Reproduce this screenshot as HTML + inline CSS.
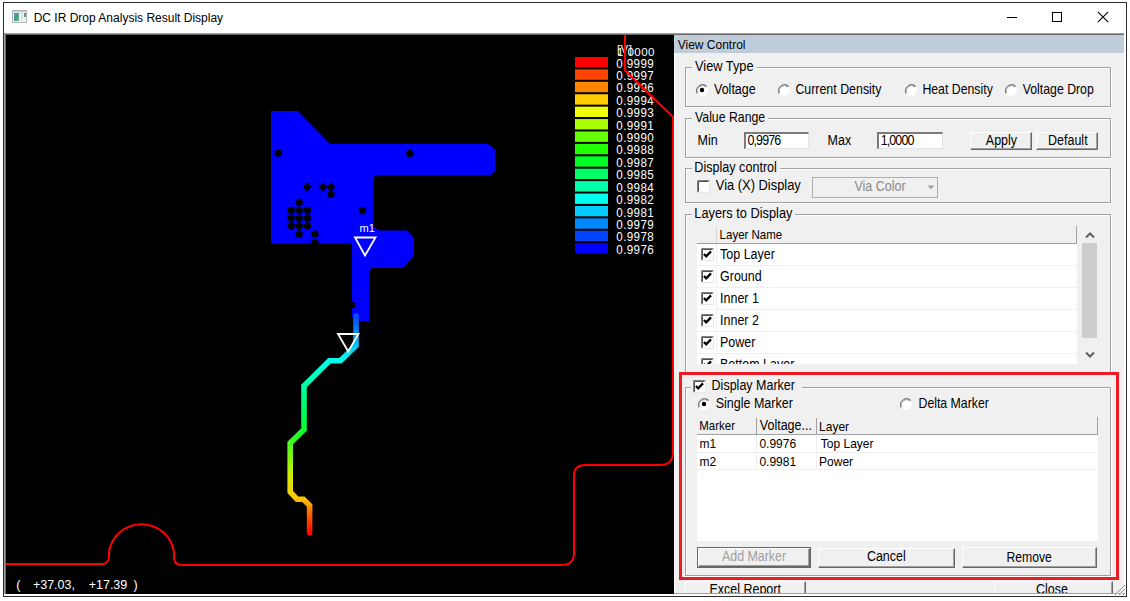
<!DOCTYPE html>
<html><head><meta charset="utf-8"><style>
html,body{margin:0;padding:0;}
body{width:1130px;height:601px;position:relative;overflow:hidden;background:#fff;font-family:'Liberation Sans', sans-serif;}
body div{position:absolute;box-sizing:border-box;}
.t{white-space:pre;}
.btn{background:#F0F0F0;border-style:solid;border-width:1px;border-color:#FFFFFF #696969 #696969 #FFFFFF;box-shadow:inset -1px -1px 0 #A0A0A0;}
.edit{background:#fff;border-style:solid;border-width:2px 1px 1px 2px;border-color:#7A7A7A #E3E3E3 #E3E3E3 #7A7A7A;}
</style></head><body>
<div style="left:3px;top:2px;width:1124px;height:595px;background:#2d2d2d;"></div><div style="left:4px;top:3px;width:1122px;height:593px;background:#ffffff;"></div><svg style="position:absolute;left:12px;top:10px" width="15" height="13" viewBox="0 0 15 13"><rect x="0.5" y="0.5" width="14" height="12" fill="#f4f4f4" stroke="#b5b5b5"/><rect x="1" y="1" width="13" height="1.5" fill="#d0d0d0"/><defs><linearGradient id="ig" x1="0" y1="0" x2="1" y2="1"><stop offset="0" stop-color="#6a8fcc"/><stop offset="0.5" stop-color="#4a9a98"/><stop offset="1" stop-color="#5cc05c"/></linearGradient></defs><rect x="2" y="3" width="5" height="8" fill="url(#ig)"/><rect x="9" y="3" width="2" height="8" fill="#e0e0e0"/><rect x="12" y="3" width="2" height="4" fill="url(#ig)"/></svg><div class="t" style="left:33.70px;top:11.54px;font-size:12px;line-height:12px;color:#000;font-family:'Liberation Sans', sans-serif;">DC IR Drop Analysis Result Display</div><div style="left:1007px;top:17px;width:10px;height:1px;background:#000;"></div><div style="left:1052px;top:12px;width:10px;height:10px;border:1px solid #000;"></div><svg style="position:absolute;left:1097px;top:11px" width="12" height="12" viewBox="0 0 12 12"><path d="M0.8 0.8 L11.2 11.2 M11.2 0.8 L0.8 11.2" stroke="#000" stroke-width="1.1"/></svg><div style="left:4px;top:33px;width:1121px;height:1px;background:#a0a0a0;"></div><div style="left:4px;top:34px;width:1121px;height:1px;background:#696969;"></div><div style="left:4px;top:33px;width:1px;height:561px;background:#a0a0a0;"></div><div style="left:5px;top:34px;width:1px;height:560px;background:#696969;"></div><div style="left:6px;top:35px;width:668px;height:559px;background:#000;"></div><svg style="position:absolute;left:6px;top:35px" width="668" height="559" viewBox="6 35 668 559"><path d="M271 111 L297.5 111 L330 144 L488 144 L495 149.5 L495 171 L490.5 175 L376.2 175 L373 178.2 L373 227 L380 230.5 L407 230.5 L414 238 L414 256 L403 268 L372 268 L369 271 L369 321 L359 321 L359 317 L352 317 L352 245 L350 243 L271 243 Z" fill="#0000FF"/><polygon points="281.95,154.51 279.81,156.65 276.79,156.65 274.65,154.51 274.65,151.49 276.79,149.35 279.81,149.35 281.95,151.49" fill="#000"/><polygon points="413.65,155.01 411.51,157.15 408.49,157.15 406.35,155.01 406.35,151.99 408.49,149.85 411.51,149.85 413.65,151.99" fill="#000"/><polygon points="307.00,182.60 311.40,187.00 307.00,191.40 302.60,187.00" fill="#000"/><polygon points="323.00,182.60 327.40,187.00 323.00,191.40 318.60,187.00" fill="#000"/><polygon points="331.00,182.60 335.40,187.00 331.00,191.40 326.60,187.00" fill="#000"/><polygon points="334.65,195.71 332.51,197.85 329.49,197.85 327.35,195.71 327.35,192.69 329.49,190.55 332.51,190.55 334.65,192.69" fill="#000"/><polygon points="302.85,203.91 300.71,206.05 297.69,206.05 295.55,203.91 295.55,200.89 297.69,198.75 300.71,198.75 302.85,200.89" fill="#000"/><polygon points="294.75,211.81 292.61,213.95 289.59,213.95 287.45,211.81 287.45,208.79 289.59,206.65 292.61,206.65 294.75,208.79" fill="#000"/><polygon points="302.85,211.81 300.71,213.95 297.69,213.95 295.55,211.81 295.55,208.79 297.69,206.65 300.71,206.65 302.85,208.79" fill="#000"/><polygon points="311.05,211.81 308.91,213.95 305.89,213.95 303.75,211.81 303.75,208.79 305.89,206.65 308.91,206.65 311.05,208.79" fill="#000"/><polygon points="294.75,219.61 292.61,221.75 289.59,221.75 287.45,219.61 287.45,216.59 289.59,214.45 292.61,214.45 294.75,216.59" fill="#000"/><polygon points="302.85,219.61 300.71,221.75 297.69,221.75 295.55,219.61 295.55,216.59 297.69,214.45 300.71,214.45 302.85,216.59" fill="#000"/><polygon points="311.05,219.61 308.91,221.75 305.89,221.75 303.75,219.61 303.75,216.59 305.89,214.45 308.91,214.45 311.05,216.59" fill="#000"/><polygon points="294.75,227.41 292.61,229.55 289.59,229.55 287.45,227.41 287.45,224.39 289.59,222.25 292.61,222.25 294.75,224.39" fill="#000"/><polygon points="302.85,227.41 300.71,229.55 297.69,229.55 295.55,227.41 295.55,224.39 297.69,222.25 300.71,222.25 302.85,224.39" fill="#000"/><polygon points="311.05,227.41 308.91,229.55 305.89,229.55 303.75,227.41 303.75,224.39 305.89,222.25 308.91,222.25 311.05,224.39" fill="#000"/><polygon points="302.85,235.71 300.71,237.85 297.69,237.85 295.55,235.71 295.55,232.69 297.69,230.55 300.71,230.55 302.85,232.69" fill="#000"/><polygon points="318.65,235.71 316.51,237.85 313.49,237.85 311.35,235.71 311.35,232.69 313.49,230.55 316.51,230.55 318.65,232.69" fill="#000"/><polygon points="318.65,244.11 316.51,246.25 313.49,246.25 311.35,244.11 311.35,241.09 313.49,238.95 316.51,238.95 318.65,241.09" fill="#000"/><polygon points="366.05,212.11 363.91,214.25 360.89,214.25 358.75,212.11 358.75,209.09 360.89,206.95 363.91,206.95 366.05,209.09" fill="#000"/><circle cx="352" cy="305" r="3.3" fill="#000"/><defs><linearGradient id="tg" gradientUnits="userSpaceOnUse" x1="0" y1="318" x2="0" y2="535"><stop offset="0" stop-color="#0050FF"/><stop offset="0.19" stop-color="#00FFEE"/><stop offset="0.5" stop-color="#00FF30"/><stop offset="0.72" stop-color="#CCEE00"/><stop offset="0.83" stop-color="#FFC800"/><stop offset="0.9" stop-color="#FF6600"/><stop offset="1" stop-color="#FF0000"/></linearGradient></defs><path d="M356 316 L356 345.5 L340.4 360.7 L329.4 360.7 L304 386 L304 429.5 L290.2 443 L290.2 492 L297 499.2 L303.3 499.2 L309.6 505.4 L309.6 533" fill="none" stroke="url(#tg)" stroke-width="5.6" stroke-linejoin="miter" stroke-linecap="round"/><path d="M355 237.5 L375.5 237.5 L365 255.5 Z" fill="none" stroke="#fff" stroke-width="1.8"/><text x="359.5" y="232" font-family="Liberation Sans" font-size="11" fill="#fff">m1</text><path d="M338 334 L358.5 334 L348.2 351.5 Z" fill="none" stroke="#fff" stroke-width="1.8"/><rect x="575" y="57.00" width="33" height="10.4" fill="#FF0000"/><text x="616.3" y="67.60" font-family="Liberation Sans" font-size="11.6" letter-spacing="0.4" fill="#fff" transform="translate(0 67.60) scale(1 1.07) translate(0 -67.60)">0.9999</text><rect x="575" y="69.41" width="33" height="10.4" fill="#FF4400"/><text x="616.3" y="80.01" font-family="Liberation Sans" font-size="11.6" letter-spacing="0.4" fill="#fff" transform="translate(0 80.01) scale(1 1.07) translate(0 -80.01)">0.9997</text><rect x="575" y="81.82" width="33" height="10.4" fill="#FF8800"/><text x="616.3" y="92.42" font-family="Liberation Sans" font-size="11.6" letter-spacing="0.4" fill="#fff" transform="translate(0 92.42) scale(1 1.07) translate(0 -92.42)">0.9996</text><rect x="575" y="94.23" width="33" height="10.4" fill="#FFCC00"/><text x="616.3" y="104.83" font-family="Liberation Sans" font-size="11.6" letter-spacing="0.4" fill="#fff" transform="translate(0 104.83) scale(1 1.07) translate(0 -104.83)">0.9994</text><rect x="575" y="106.64" width="33" height="10.4" fill="#EEFF00"/><text x="616.3" y="117.24" font-family="Liberation Sans" font-size="11.6" letter-spacing="0.4" fill="#fff" transform="translate(0 117.24) scale(1 1.07) translate(0 -117.24)">0.9993</text><rect x="575" y="119.05" width="33" height="10.4" fill="#AAFF00"/><text x="616.3" y="129.65" font-family="Liberation Sans" font-size="11.6" letter-spacing="0.4" fill="#fff" transform="translate(0 129.65) scale(1 1.07) translate(0 -129.65)">0.9991</text><rect x="575" y="131.46" width="33" height="10.4" fill="#66FF00"/><text x="616.3" y="142.06" font-family="Liberation Sans" font-size="11.6" letter-spacing="0.4" fill="#fff" transform="translate(0 142.06) scale(1 1.07) translate(0 -142.06)">0.9990</text><rect x="575" y="143.87" width="33" height="10.4" fill="#22FF00"/><text x="616.3" y="154.47" font-family="Liberation Sans" font-size="11.6" letter-spacing="0.4" fill="#fff" transform="translate(0 154.47) scale(1 1.07) translate(0 -154.47)">0.9988</text><rect x="575" y="156.28" width="33" height="10.4" fill="#00FF22"/><text x="616.3" y="166.88" font-family="Liberation Sans" font-size="11.6" letter-spacing="0.4" fill="#fff" transform="translate(0 166.88) scale(1 1.07) translate(0 -166.88)">0.9987</text><rect x="575" y="168.69" width="33" height="10.4" fill="#00FF66"/><text x="616.3" y="179.29" font-family="Liberation Sans" font-size="11.6" letter-spacing="0.4" fill="#fff" transform="translate(0 179.29) scale(1 1.07) translate(0 -179.29)">0.9985</text><rect x="575" y="181.10" width="33" height="10.4" fill="#00FFAA"/><text x="616.3" y="191.70" font-family="Liberation Sans" font-size="11.6" letter-spacing="0.4" fill="#fff" transform="translate(0 191.70) scale(1 1.07) translate(0 -191.70)">0.9984</text><rect x="575" y="193.51" width="33" height="10.4" fill="#00FFEE"/><text x="616.3" y="204.11" font-family="Liberation Sans" font-size="11.6" letter-spacing="0.4" fill="#fff" transform="translate(0 204.11) scale(1 1.07) translate(0 -204.11)">0.9982</text><rect x="575" y="205.92" width="33" height="10.4" fill="#00CCFF"/><text x="616.3" y="216.52" font-family="Liberation Sans" font-size="11.6" letter-spacing="0.4" fill="#fff" transform="translate(0 216.52) scale(1 1.07) translate(0 -216.52)">0.9981</text><rect x="575" y="218.33" width="33" height="10.4" fill="#0088FF"/><text x="616.3" y="228.93" font-family="Liberation Sans" font-size="11.6" letter-spacing="0.4" fill="#fff" transform="translate(0 228.93) scale(1 1.07) translate(0 -228.93)">0.9979</text><rect x="575" y="230.74" width="33" height="10.4" fill="#0044FF"/><text x="616.3" y="241.34" font-family="Liberation Sans" font-size="11.6" letter-spacing="0.4" fill="#fff" transform="translate(0 241.34) scale(1 1.07) translate(0 -241.34)">0.9978</text><rect x="575" y="243.15" width="33" height="10.4" fill="#0000FF"/><text x="616.3" y="253.75" font-family="Liberation Sans" font-size="11.6" letter-spacing="0.4" fill="#fff" transform="translate(0 253.75) scale(1 1.07) translate(0 -253.75)">0.9976</text><text x="617" y="56" font-family="Liberation Sans" font-size="11.6" letter-spacing="0.4" fill="#fff">1.0000</text><text x="617" y="52.5" font-family="Liberation Sans" font-size="11.6" letter-spacing="0.4" fill="#fff">[V]</text><text x="16.2" y="589" font-family="Liberation Sans" font-size="12.5" fill="#fff" transform="translate(0 589) scale(1 1.04) translate(0 -589)">(</text><text x="32.9" y="589" font-family="Liberation Sans" font-size="12.5" fill="#fff" transform="translate(0 589) scale(1 1.04) translate(0 -589)">+37.03,</text><text x="88.7" y="589" font-family="Liberation Sans" font-size="12.5" fill="#fff" transform="translate(0 589) scale(1 1.04) translate(0 -589)">+17.39</text><text x="133.6" y="589" font-family="Liberation Sans" font-size="12.5" fill="#fff" transform="translate(0 589) scale(1 1.04) translate(0 -589)">)</text><path d="M6 564 L103 564 Q109 563 109 557 L109 552 A32.9 32.9 0 0 1 174 552 L174 557 Q174 565 182 565 L562 565 Q574 565 574 553 L574 476 Q574 465 585 465 L660 465 Q673 465 673 452 L673 117 L625 70.5 L625 35" fill="none" stroke="#FF0000" stroke-width="2"/></svg><div style="left:674px;top:35px;width:450px;height:559px;background:#F0F0F0;"></div><div style="left:674px;top:35px;width:450px;height:18px;background:#BFCDDB;"></div><div style="left:674px;top:53px;width:1px;height:540px;background:#FAFCFC;"></div><div class="t" style="left:677.70px;top:38.84px;font-size:12px;line-height:12px;color:#000;font-family:'Liberation Sans', sans-serif;">View Control</div><div style="left:685px;top:67px;width:425px;height:1px;background:#A0A0A0;"></div><div style="left:686px;top:68px;width:424px;height:1px;background:#FFFFFF;"></div><div style="left:685px;top:67px;width:1px;height:39px;background:#A0A0A0;"></div><div style="left:686px;top:68px;width:1px;height:38px;background:#FFFFFF;"></div><div style="left:685px;top:106px;width:426px;height:1px;background:#A0A0A0;"></div><div style="left:685px;top:107px;width:427px;height:1px;background:#FFFFFF;"></div><div style="left:1110px;top:67px;width:1px;height:39px;background:#A0A0A0;"></div><div style="left:1111px;top:67px;width:1px;height:40px;background:#FFFFFF;"></div><div style="left:692px;top:61px;width:65px;height:14px;background:#F0F0F0;"></div><div class="t" style="left:695.00px;top:61.06px;font-size:12.8px;line-height:12.8px;color:#000;font-family:'Liberation Sans', sans-serif;transform:scaleY(1.13);transform-origin:0 10.84px;">View Type</div><svg style="position:absolute;left:695px;top:83px" width="14" height="14" viewBox="0 0 14 14"><circle cx="7" cy="7" r="6" fill="#fff"/><path d="M2.2 10.4 A6 6 0 0 1 11.8 3.6" fill="none" stroke="#7a7a7a" stroke-width="1.3"/><path d="M2.9 10.0 A5 5 0 0 1 10.9 4.2" fill="none" stroke="#b8b8b8" stroke-width="1"/><circle cx="7" cy="7" r="2.2" fill="#000"/></svg><div class="t" style="left:714.00px;top:84.32px;font-size:12.5px;line-height:12.5px;color:#000;font-family:'Liberation Sans', sans-serif;transform:scaleY(1.13);transform-origin:0 10.58px;">Voltage</div><svg style="position:absolute;left:777px;top:83px" width="14" height="14" viewBox="0 0 14 14"><circle cx="7" cy="7" r="6" fill="#fff"/><path d="M2.2 10.4 A6 6 0 0 1 11.8 3.6" fill="none" stroke="#7a7a7a" stroke-width="1.3"/><path d="M2.9 10.0 A5 5 0 0 1 10.9 4.2" fill="none" stroke="#b8b8b8" stroke-width="1"/></svg><div class="t" style="left:795.40px;top:84.40px;font-size:12.4px;line-height:12.4px;color:#000;font-family:'Liberation Sans', sans-serif;transform:scaleY(1.13);transform-origin:0 10.50px;">Current Density</div><svg style="position:absolute;left:903.5px;top:83px" width="14" height="14" viewBox="0 0 14 14"><circle cx="7" cy="7" r="6" fill="#fff"/><path d="M2.2 10.4 A6 6 0 0 1 11.8 3.6" fill="none" stroke="#7a7a7a" stroke-width="1.3"/><path d="M2.9 10.0 A5 5 0 0 1 10.9 4.2" fill="none" stroke="#b8b8b8" stroke-width="1"/></svg><div class="t" style="left:922.40px;top:84.49px;font-size:12.3px;line-height:12.3px;color:#000;font-family:'Liberation Sans', sans-serif;transform:scaleY(1.13);transform-origin:0 10.41px;">Heat Density</div><svg style="position:absolute;left:1004px;top:83px" width="14" height="14" viewBox="0 0 14 14"><circle cx="7" cy="7" r="6" fill="#fff"/><path d="M2.2 10.4 A6 6 0 0 1 11.8 3.6" fill="none" stroke="#7a7a7a" stroke-width="1.3"/><path d="M2.9 10.0 A5 5 0 0 1 10.9 4.2" fill="none" stroke="#b8b8b8" stroke-width="1"/></svg><div class="t" style="left:1022.70px;top:84.49px;font-size:12.3px;line-height:12.3px;color:#000;font-family:'Liberation Sans', sans-serif;transform:scaleY(1.13);transform-origin:0 10.41px;">Voltage Drop</div><div style="left:685px;top:118px;width:425px;height:1px;background:#A0A0A0;"></div><div style="left:686px;top:119px;width:424px;height:1px;background:#FFFFFF;"></div><div style="left:685px;top:118px;width:1px;height:39px;background:#A0A0A0;"></div><div style="left:686px;top:119px;width:1px;height:38px;background:#FFFFFF;"></div><div style="left:685px;top:157px;width:426px;height:1px;background:#A0A0A0;"></div><div style="left:685px;top:158px;width:427px;height:1px;background:#FFFFFF;"></div><div style="left:1110px;top:118px;width:1px;height:39px;background:#A0A0A0;"></div><div style="left:1111px;top:118px;width:1px;height:40px;background:#FFFFFF;"></div><div style="left:692px;top:112px;width:76px;height:14px;background:#F0F0F0;"></div><div class="t" style="left:695.00px;top:112.49px;font-size:12.3px;line-height:12.3px;color:#000;font-family:'Liberation Sans', sans-serif;transform:scaleY(1.13);transform-origin:0 10.41px;">Value Range</div><div class="t" style="left:697.50px;top:135.32px;font-size:12.5px;line-height:12.5px;color:#000;font-family:'Liberation Sans', sans-serif;transform:scaleY(1.13);transform-origin:0 10.58px;">Min</div><div class="edit" style="left:744px;top:132px;width:65px;height:17px;"></div><div class="t" style="left:747.50px;top:135.32px;font-size:12.5px;line-height:12.5px;color:#000;font-family:'Liberation Sans', sans-serif;transform:scaleY(1.13);transform-origin:0 10.58px;letter-spacing:-0.9px;">0,9976</div><div class="t" style="left:827.60px;top:135.32px;font-size:12.5px;line-height:12.5px;color:#000;font-family:'Liberation Sans', sans-serif;transform:scaleY(1.13);transform-origin:0 10.58px;">Max</div><div class="edit" style="left:877px;top:132px;width:66px;height:17px;"></div><div class="t" style="left:880.70px;top:135.32px;font-size:12.5px;line-height:12.5px;color:#000;font-family:'Liberation Sans', sans-serif;transform:scaleY(1.13);transform-origin:0 10.58px;letter-spacing:-0.9px;">1,0000</div><div class="btn" style="left:970px;top:132px;width:62px;height:18px;"></div><div class="t" style="left:985.80px;top:134.82px;font-size:12.5px;line-height:12.5px;color:#000;font-family:'Liberation Sans', sans-serif;transform:scaleY(1.13);transform-origin:0 10.58px;">Apply</div><div class="btn" style="left:1036px;top:132px;width:62px;height:18px;"></div><div class="t" style="left:1048.00px;top:134.82px;font-size:12.5px;line-height:12.5px;color:#000;font-family:'Liberation Sans', sans-serif;transform:scaleY(1.13);transform-origin:0 10.58px;">Default</div><div style="left:685px;top:168px;width:425px;height:1px;background:#A0A0A0;"></div><div style="left:686px;top:169px;width:424px;height:1px;background:#FFFFFF;"></div><div style="left:685px;top:168px;width:1px;height:34px;background:#A0A0A0;"></div><div style="left:686px;top:169px;width:1px;height:33px;background:#FFFFFF;"></div><div style="left:685px;top:202px;width:426px;height:1px;background:#A0A0A0;"></div><div style="left:685px;top:203px;width:427px;height:1px;background:#FFFFFF;"></div><div style="left:1110px;top:168px;width:1px;height:34px;background:#A0A0A0;"></div><div style="left:1111px;top:168px;width:1px;height:35px;background:#FFFFFF;"></div><div style="left:692px;top:162px;width:88px;height:14px;background:#F0F0F0;"></div><div class="t" style="left:694.30px;top:162.43px;font-size:12.6px;line-height:12.6px;color:#000;font-family:'Liberation Sans', sans-serif;transform:scaleY(1.13);transform-origin:0 10.67px;">Display control</div><svg style="position:absolute;left:697px;top:180px" width="13" height="13" viewBox="0 0 13 13"><rect x="0" y="0" width="13" height="13" fill="#fff"/><path d="M0.5 12.5 V0.5 H12.5" fill="none" stroke="#808080" stroke-width="1"/><path d="M1.5 11.5 V1.5 H11.5" fill="none" stroke="#505050" stroke-width="1"/><path d="M0.5 12.5 H12.5 V0.5" fill="none" stroke="#e6e6e6" stroke-width="1"/></svg><div class="t" style="left:715.80px;top:180.38px;font-size:12.9px;line-height:12.9px;color:#000;font-family:'Liberation Sans', sans-serif;transform:scaleY(1.13);transform-origin:0 10.92px;">Via (X) Display</div><div style="left:812px;top:177px;width:126px;height:21px;border:1px solid #ADADAD;background:#F0F0F0;"></div><div class="t" style="left:854.40px;top:181.32px;font-size:12.5px;line-height:12.5px;color:#8a8a8a;font-family:'Liberation Sans', sans-serif;transform:scaleY(1.13);transform-origin:0 10.58px;">Via Color</div><svg style="position:absolute;left:927px;top:185px" width="8" height="5" viewBox="0 0 8 5"><path d="M0.5 0.5 L7.5 0.5 L4 4.2 Z" fill="#a0a0a0"/></svg><div style="left:685px;top:214px;width:425px;height:1px;background:#A0A0A0;"></div><div style="left:686px;top:215px;width:424px;height:1px;background:#FFFFFF;"></div><div style="left:685px;top:214px;width:1px;height:166px;background:#A0A0A0;"></div><div style="left:686px;top:215px;width:1px;height:165px;background:#FFFFFF;"></div><div style="left:1110px;top:214px;width:1px;height:166px;background:#A0A0A0;"></div><div style="left:1111px;top:214px;width:1px;height:167px;background:#FFFFFF;"></div><div style="left:692px;top:208px;width:103px;height:14px;background:#F0F0F0;"></div><div class="t" style="left:694.30px;top:207.66px;font-size:12.8px;line-height:12.8px;color:#000;font-family:'Liberation Sans', sans-serif;transform:scaleY(1.13);transform-origin:0 10.84px;">Layers to Display</div><div style="left:697px;top:226px;width:380px;height:138px;background:#FFFFFF;"></div><div style="left:697px;top:226px;width:380px;height:18px;background:#F0F0F0;"></div><div style="left:697px;top:243px;width:380px;height:1px;background:#A0A0A0;"></div><div style="left:1076px;top:226px;width:1px;height:18px;background:#A0A0A0;"></div><div style="left:716px;top:227px;width:1px;height:16px;background:#D5D5D5;"></div><div class="t" style="left:719.60px;top:230.47px;font-size:11.5px;line-height:11.5px;color:#000;font-family:'Liberation Sans', sans-serif;transform:scaleY(1.04);transform-origin:0 9.73px;">Layer Name</div><div style="left:716px;top:244px;width:1px;height:120px;background:#F0F0F0;"></div><div style="left:697px;top:265px;width:380px;height:1px;background:#F0F0F0;"></div><svg style="position:absolute;left:701px;top:248px" width="13" height="13" viewBox="0 0 13 13"><rect x="0" y="0" width="13" height="13" fill="#fff"/><path d="M0.5 12.5 V0.5 H12.5" fill="none" stroke="#808080" stroke-width="1"/><path d="M1.5 11.5 V1.5 H11.5" fill="none" stroke="#505050" stroke-width="1"/><path d="M0.5 12.5 H12.5 V0.5" fill="none" stroke="#e6e6e6" stroke-width="1"/><path d="M3 6 L5.2 8.4 L10 3.4" fill="none" stroke="#000" stroke-width="2.3"/></svg><div class="t" style="left:720.00px;top:249.32px;font-size:12.5px;line-height:12.5px;color:#000;font-family:'Liberation Sans', sans-serif;transform:scaleY(1.13);transform-origin:0 10.58px;">Top Layer</div><div style="left:697px;top:287px;width:380px;height:1px;background:#F0F0F0;"></div><svg style="position:absolute;left:701px;top:270px" width="13" height="13" viewBox="0 0 13 13"><rect x="0" y="0" width="13" height="13" fill="#fff"/><path d="M0.5 12.5 V0.5 H12.5" fill="none" stroke="#808080" stroke-width="1"/><path d="M1.5 11.5 V1.5 H11.5" fill="none" stroke="#505050" stroke-width="1"/><path d="M0.5 12.5 H12.5 V0.5" fill="none" stroke="#e6e6e6" stroke-width="1"/><path d="M3 6 L5.2 8.4 L10 3.4" fill="none" stroke="#000" stroke-width="2.3"/></svg><div class="t" style="left:720.00px;top:271.32px;font-size:12.5px;line-height:12.5px;color:#000;font-family:'Liberation Sans', sans-serif;transform:scaleY(1.13);transform-origin:0 10.58px;">Ground</div><div style="left:697px;top:309px;width:380px;height:1px;background:#F0F0F0;"></div><svg style="position:absolute;left:701px;top:292px" width="13" height="13" viewBox="0 0 13 13"><rect x="0" y="0" width="13" height="13" fill="#fff"/><path d="M0.5 12.5 V0.5 H12.5" fill="none" stroke="#808080" stroke-width="1"/><path d="M1.5 11.5 V1.5 H11.5" fill="none" stroke="#505050" stroke-width="1"/><path d="M0.5 12.5 H12.5 V0.5" fill="none" stroke="#e6e6e6" stroke-width="1"/><path d="M3 6 L5.2 8.4 L10 3.4" fill="none" stroke="#000" stroke-width="2.3"/></svg><div class="t" style="left:720.00px;top:293.32px;font-size:12.5px;line-height:12.5px;color:#000;font-family:'Liberation Sans', sans-serif;transform:scaleY(1.13);transform-origin:0 10.58px;">Inner 1</div><div style="left:697px;top:331px;width:380px;height:1px;background:#F0F0F0;"></div><svg style="position:absolute;left:701px;top:314px" width="13" height="13" viewBox="0 0 13 13"><rect x="0" y="0" width="13" height="13" fill="#fff"/><path d="M0.5 12.5 V0.5 H12.5" fill="none" stroke="#808080" stroke-width="1"/><path d="M1.5 11.5 V1.5 H11.5" fill="none" stroke="#505050" stroke-width="1"/><path d="M0.5 12.5 H12.5 V0.5" fill="none" stroke="#e6e6e6" stroke-width="1"/><path d="M3 6 L5.2 8.4 L10 3.4" fill="none" stroke="#000" stroke-width="2.3"/></svg><div class="t" style="left:720.00px;top:315.32px;font-size:12.5px;line-height:12.5px;color:#000;font-family:'Liberation Sans', sans-serif;transform:scaleY(1.13);transform-origin:0 10.58px;">Inner 2</div><div style="left:697px;top:353px;width:380px;height:1px;background:#F0F0F0;"></div><svg style="position:absolute;left:701px;top:336px" width="13" height="13" viewBox="0 0 13 13"><rect x="0" y="0" width="13" height="13" fill="#fff"/><path d="M0.5 12.5 V0.5 H12.5" fill="none" stroke="#808080" stroke-width="1"/><path d="M1.5 11.5 V1.5 H11.5" fill="none" stroke="#505050" stroke-width="1"/><path d="M0.5 12.5 H12.5 V0.5" fill="none" stroke="#e6e6e6" stroke-width="1"/><path d="M3 6 L5.2 8.4 L10 3.4" fill="none" stroke="#000" stroke-width="2.3"/></svg><div class="t" style="left:720.00px;top:337.32px;font-size:12.5px;line-height:12.5px;color:#000;font-family:'Liberation Sans', sans-serif;transform:scaleY(1.13);transform-origin:0 10.58px;">Power</div><div style="left:697px;top:375px;width:380px;height:1px;background:#F0F0F0;"></div><svg style="position:absolute;left:701px;top:358px" width="13" height="13" viewBox="0 0 13 13"><rect x="0" y="0" width="13" height="13" fill="#fff"/><path d="M0.5 12.5 V0.5 H12.5" fill="none" stroke="#808080" stroke-width="1"/><path d="M1.5 11.5 V1.5 H11.5" fill="none" stroke="#505050" stroke-width="1"/><path d="M0.5 12.5 H12.5 V0.5" fill="none" stroke="#e6e6e6" stroke-width="1"/><path d="M3 6 L5.2 8.4 L10 3.4" fill="none" stroke="#000" stroke-width="2.3"/></svg><div class="t" style="left:720.00px;top:359.32px;font-size:12.5px;line-height:12.5px;color:#000;font-family:'Liberation Sans', sans-serif;transform:scaleY(1.13);transform-origin:0 10.58px;">Bottom Layer</div><div style="left:697px;top:364px;width:380px;height:8px;background:#F0F0F0;"></div><div style="left:1082px;top:226px;width:16px;height:138px;background:#F0F0F0;"></div><div style="left:1082px;top:243px;width:15px;height:95px;background:#CDCDCD;"></div><svg style="position:absolute;left:1085px;top:231px" width="10" height="8" viewBox="0 0 10 8"><path d="M1 6.5 L5 2.5 L9 6.5" fill="none" stroke="#606060" stroke-width="2"/></svg><svg style="position:absolute;left:1085px;top:351px" width="10" height="8" viewBox="0 0 10 8"><path d="M1 1.5 L5 5.5 L9 1.5" fill="none" stroke="#606060" stroke-width="2"/></svg><div style="left:675px;top:375px;width:449px;height:219px;background:#F0F0F0;"></div><div style="left:685px;top:387px;width:425px;height:1px;background:#A0A0A0;"></div><div style="left:686px;top:388px;width:424px;height:1px;background:#FFFFFF;"></div><div style="left:685px;top:387px;width:1px;height:188px;background:#A0A0A0;"></div><div style="left:686px;top:388px;width:1px;height:187px;background:#FFFFFF;"></div><div style="left:685px;top:575px;width:426px;height:1px;background:#A0A0A0;"></div><div style="left:685px;top:576px;width:427px;height:1px;background:#FFFFFF;"></div><div style="left:1110px;top:387px;width:1px;height:188px;background:#A0A0A0;"></div><div style="left:1111px;top:387px;width:1px;height:189px;background:#FFFFFF;"></div><div style="left:691px;top:381px;width:111px;height:14px;background:#F0F0F0;"></div><svg style="position:absolute;left:693px;top:380px" width="13" height="13" viewBox="0 0 13 13"><rect x="0" y="0" width="13" height="13" fill="#fff"/><path d="M0.5 12.5 V0.5 H12.5" fill="none" stroke="#808080" stroke-width="1"/><path d="M1.5 11.5 V1.5 H11.5" fill="none" stroke="#505050" stroke-width="1"/><path d="M0.5 12.5 H12.5 V0.5" fill="none" stroke="#e6e6e6" stroke-width="1"/><path d="M3 6 L5.2 8.4 L10 3.4" fill="none" stroke="#000" stroke-width="2.3"/></svg><div class="t" style="left:711.60px;top:379.92px;font-size:12.5px;line-height:12.5px;color:#000;font-family:'Liberation Sans', sans-serif;transform:scaleY(1.13);transform-origin:0 10.58px;">Display Marker</div><svg style="position:absolute;left:697px;top:397px" width="14" height="14" viewBox="0 0 14 14"><circle cx="7" cy="7" r="6" fill="#fff"/><path d="M2.2 10.4 A6 6 0 0 1 11.8 3.6" fill="none" stroke="#7a7a7a" stroke-width="1.3"/><path d="M2.9 10.0 A5 5 0 0 1 10.9 4.2" fill="none" stroke="#b8b8b8" stroke-width="1"/><circle cx="7" cy="7" r="2.2" fill="#000"/></svg><div class="t" style="left:715.70px;top:397.82px;font-size:12.5px;line-height:12.5px;color:#000;font-family:'Liberation Sans', sans-serif;transform:scaleY(1.13);transform-origin:0 10.58px;">Single Marker</div><svg style="position:absolute;left:899.2px;top:396.7px" width="14" height="14" viewBox="0 0 14 14"><circle cx="7" cy="7" r="6" fill="#fff"/><path d="M2.2 10.4 A6 6 0 0 1 11.8 3.6" fill="none" stroke="#7a7a7a" stroke-width="1.3"/><path d="M2.9 10.0 A5 5 0 0 1 10.9 4.2" fill="none" stroke="#b8b8b8" stroke-width="1"/></svg><div class="t" style="left:918.50px;top:397.99px;font-size:12.3px;line-height:12.3px;color:#000;font-family:'Liberation Sans', sans-serif;transform:scaleY(1.13);transform-origin:0 10.41px;">Delta Marker</div><div style="left:697px;top:417px;width:401px;height:124px;background:#FFFFFF;"></div><div style="left:697px;top:417px;width:401px;height:18px;background:#F0F0F0;"></div><div style="left:697px;top:434px;width:401px;height:1px;background:#A0A0A0;"></div><div style="left:1097px;top:417px;width:1px;height:18px;background:#A0A0A0;"></div><div style="left:756px;top:418px;width:1px;height:16px;background:#A0A0A0;"></div><div style="left:816px;top:418px;width:1px;height:16px;background:#A0A0A0;"></div><div class="t" style="left:699.20px;top:420.97px;font-size:11.5px;line-height:11.5px;color:#000;font-family:'Liberation Sans', sans-serif;transform:scaleY(1.13);transform-origin:0 9.73px;">Marker</div><div class="t" style="left:759.80px;top:420.12px;font-size:12.5px;line-height:12.5px;color:#000;font-family:'Liberation Sans', sans-serif;transform:scaleY(1.13);transform-origin:0 10.58px;">Voltage...</div><div class="t" style="left:819.10px;top:420.54px;font-size:12px;line-height:12px;color:#000;font-family:'Liberation Sans', sans-serif;transform:scaleY(1.13);transform-origin:0 10.16px;">Layer</div><div style="left:697px;top:452px;width:401px;height:1px;background:#F0F0F0;"></div><div style="left:756px;top:435px;width:1px;height:17px;background:#F0F0F0;"></div><div style="left:816px;top:435px;width:1px;height:17px;background:#F0F0F0;"></div><div class="t" style="left:699.50px;top:437.94px;font-size:12px;line-height:12px;color:#000;font-family:'Liberation Sans', sans-serif;transform:scaleY(1.13);transform-origin:0 10.16px;">m1</div><div class="t" style="left:759.40px;top:437.94px;font-size:12px;line-height:12px;color:#000;font-family:'Liberation Sans', sans-serif;transform:scaleY(1.13);transform-origin:0 10.16px;">0.9976</div><div class="t" style="left:820.80px;top:437.94px;font-size:12px;line-height:12px;color:#000;font-family:'Liberation Sans', sans-serif;transform:scaleY(1.13);transform-origin:0 10.16px;">Top Layer</div><div style="left:697px;top:469px;width:401px;height:1px;background:#F0F0F0;"></div><div style="left:756px;top:452px;width:1px;height:17px;background:#F0F0F0;"></div><div style="left:816px;top:452px;width:1px;height:17px;background:#F0F0F0;"></div><div class="t" style="left:699.50px;top:455.94px;font-size:12px;line-height:12px;color:#000;font-family:'Liberation Sans', sans-serif;transform:scaleY(1.13);transform-origin:0 10.16px;">m2</div><div class="t" style="left:759.40px;top:455.94px;font-size:12px;line-height:12px;color:#000;font-family:'Liberation Sans', sans-serif;transform:scaleY(1.13);transform-origin:0 10.16px;">0.9981</div><div class="t" style="left:819.10px;top:455.94px;font-size:12px;line-height:12px;color:#000;font-family:'Liberation Sans', sans-serif;transform:scaleY(1.13);transform-origin:0 10.16px;">Power</div><div style="left:697px;top:547px;width:114px;height:21px;border:1px solid #696969;"></div><div class="btn" style="left:698px;top:548px;width:112px;height:19px;"></div><div class="t" style="left:722.00px;top:551.40px;font-size:12.4px;line-height:12.4px;color:#A0A0A0;font-family:'Liberation Sans', sans-serif;transform:scaleY(1.13);transform-origin:0 10.50px;">Add Marker</div><div class="btn" style="left:818px;top:548px;width:137px;height:20px;"></div><div class="t" style="left:866.90px;top:551.32px;font-size:12.5px;line-height:12.5px;color:#000;font-family:'Liberation Sans', sans-serif;transform:scaleY(1.13);transform-origin:0 10.58px;">Cancel</div><div class="btn" style="left:962px;top:547px;width:135px;height:21px;"></div><div class="t" style="left:1006.50px;top:551.57px;font-size:12.2px;line-height:12.2px;color:#000;font-family:'Liberation Sans', sans-serif;transform:scaleY(1.13);transform-origin:0 10.33px;">Remove</div><div style="left:674px;top:580px;width:450px;height:13px;overflow:hidden;"><div class="btn" style="left:11px;top:1px;width:121px;height:24px;"></div><div class="btn" style="left:320px;top:1px;width:119px;height:24px;"></div><div class="t" style="left:35.4px;top:3.2999999999999545px;font-size:12.5px;line-height:12.5px;transform:scaleY(1.11);transform-origin:0 0;">Excel Report</div><div class="t" style="left:362px;top:3.2999999999999545px;font-size:12.5px;line-height:12.5px;transform:scaleY(1.11);transform-origin:0 0;">Close</div></div><div style="left:674px;top:593px;width:450px;height:1px;background:#A0A0A0;"></div><div style="left:4px;top:594px;width:1122px;height:2px;background:#FFFFFF;"></div><div style="left:1124px;top:33px;width:2px;height:563px;background:#FFFFFF;"></div><svg style="position:absolute;left:1112px;top:582px" width="14" height="14" viewBox="0 0 14 14"><path d="M13 3 L3 13 M13 7 L7 13 M13 11 L11 13" stroke="#8a8a8a" stroke-width="1"/><path d="M13 4 L4 13 M13 8 L8 13" stroke="#fff" stroke-width="1"/></svg><div style="left:679px;top:372px;width:440px;height:208px;border:3px solid #ED1C24;"></div>
</body></html>
